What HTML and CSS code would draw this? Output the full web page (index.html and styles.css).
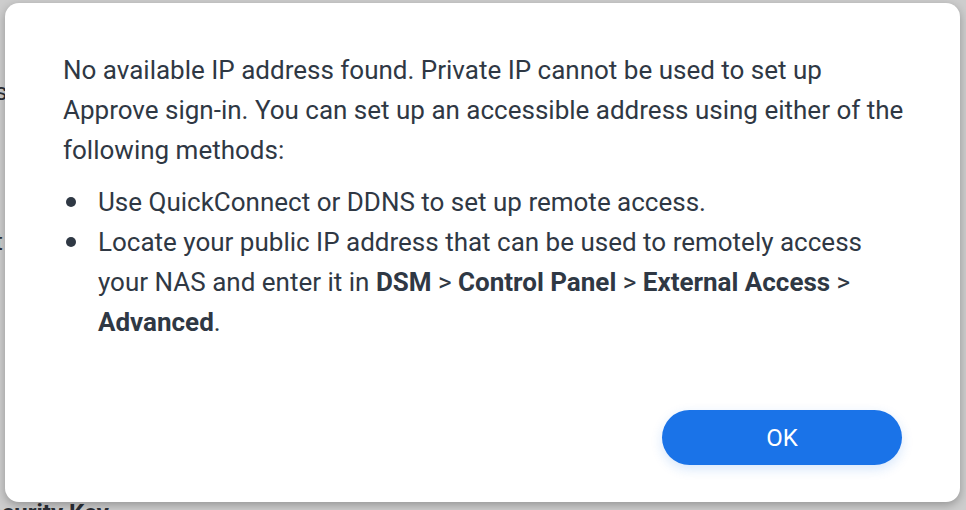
FILE: index.html
```html
<!DOCTYPE html>
<html>
<head>
<meta charset="utf-8">
<link rel="stylesheet" href="styles.css">
</head>
<body>
<div class="under">
  <div class="under-line l1">i</div>
  <div class="under-line l2">s</div>
  <div class="under-line l3">t</div>
  <div class="under-title">Security Key</div>
</div>
<div class="dialog">
  <div class="content">
    <p class="msg">No available IP address found. Private IP cannot be used to set up Approve sign-in. You can set up an accessible address using either of the following methods:</p>
    <ul class="methods">
      <li>Use QuickConnect or DDNS to set up remote access.</li>
      <li>Locate your public IP address that can be used to remotely access your NAS and enter it in <b>DSM</b> &gt; <b>Control Panel</b> &gt; <b>External Access</b> &gt; <b>Advanced</b>.</li>
    </ul>
  </div>
  <div class="footer">
    <button class="ok">OK</button>
  </div>
</div>
</body>
</html>
```
FILE: styles.css
```css
html, body {
  margin: 0;
  padding: 0;
  width: 966px;
  height: 510px;
  overflow: hidden;
}
body {
  background: #cdcdcd;
  font-family: Roboto, "Liberation Sans", sans-serif;
  position: relative;
}
.under {
  position: absolute;
  inset: 0;
  color: #2b2f36;
}
.under-line {
  position: absolute;
  left: -5px;
  font-size: 24px;
}
.l1 { top: 20px; }
.l2 { top: 78px; }
.l3 { top: 228px; }
.under-title {
  position: absolute;
  left: -26px;
  top: 499px;
  font-size: 24px;
  font-weight: 700;
}
.dialog {
  position: absolute;
  left: 5px;
  top: 3px;
  width: 955px;
  height: 499px;
  box-sizing: border-box;
  background: #fff;
  border-radius: 14px;
  box-shadow: 0 3px 10px rgba(0, 0, 0, 0.28);
  padding: 47px 56px 37px 58px;
  display: flex;
  flex-direction: column;
  color: #2f3844;
  font-size: 26px;
  line-height: 40px;
}
.msg {
  margin: 0;
}
.methods {
  margin: 12px 0 0 0;
  padding-left: 35px;
  list-style: none;
}
.methods li {
  position: relative;
}
.methods li::before {
  content: "";
  position: absolute;
  left: -32px;
  top: 15px;
  width: 10px;
  height: 10px;
  border-radius: 50%;
  background: #2f3844;
}
.methods b {
  font-weight: 700;
}
.footer {
  margin-top: auto;
  margin-right: 2px;
  display: flex;
  justify-content: flex-end;
}
.ok {
  width: 240px;
  height: 55px;
  border: none;
  border-radius: 28px;
  background: #1a73e8;
  color: #fff;
  font-family: Roboto, "Liberation Sans", sans-serif;
  font-size: 24px;
  box-shadow: 0 4px 12px rgba(26, 115, 232, 0.18);
  padding: 0;
}
```
